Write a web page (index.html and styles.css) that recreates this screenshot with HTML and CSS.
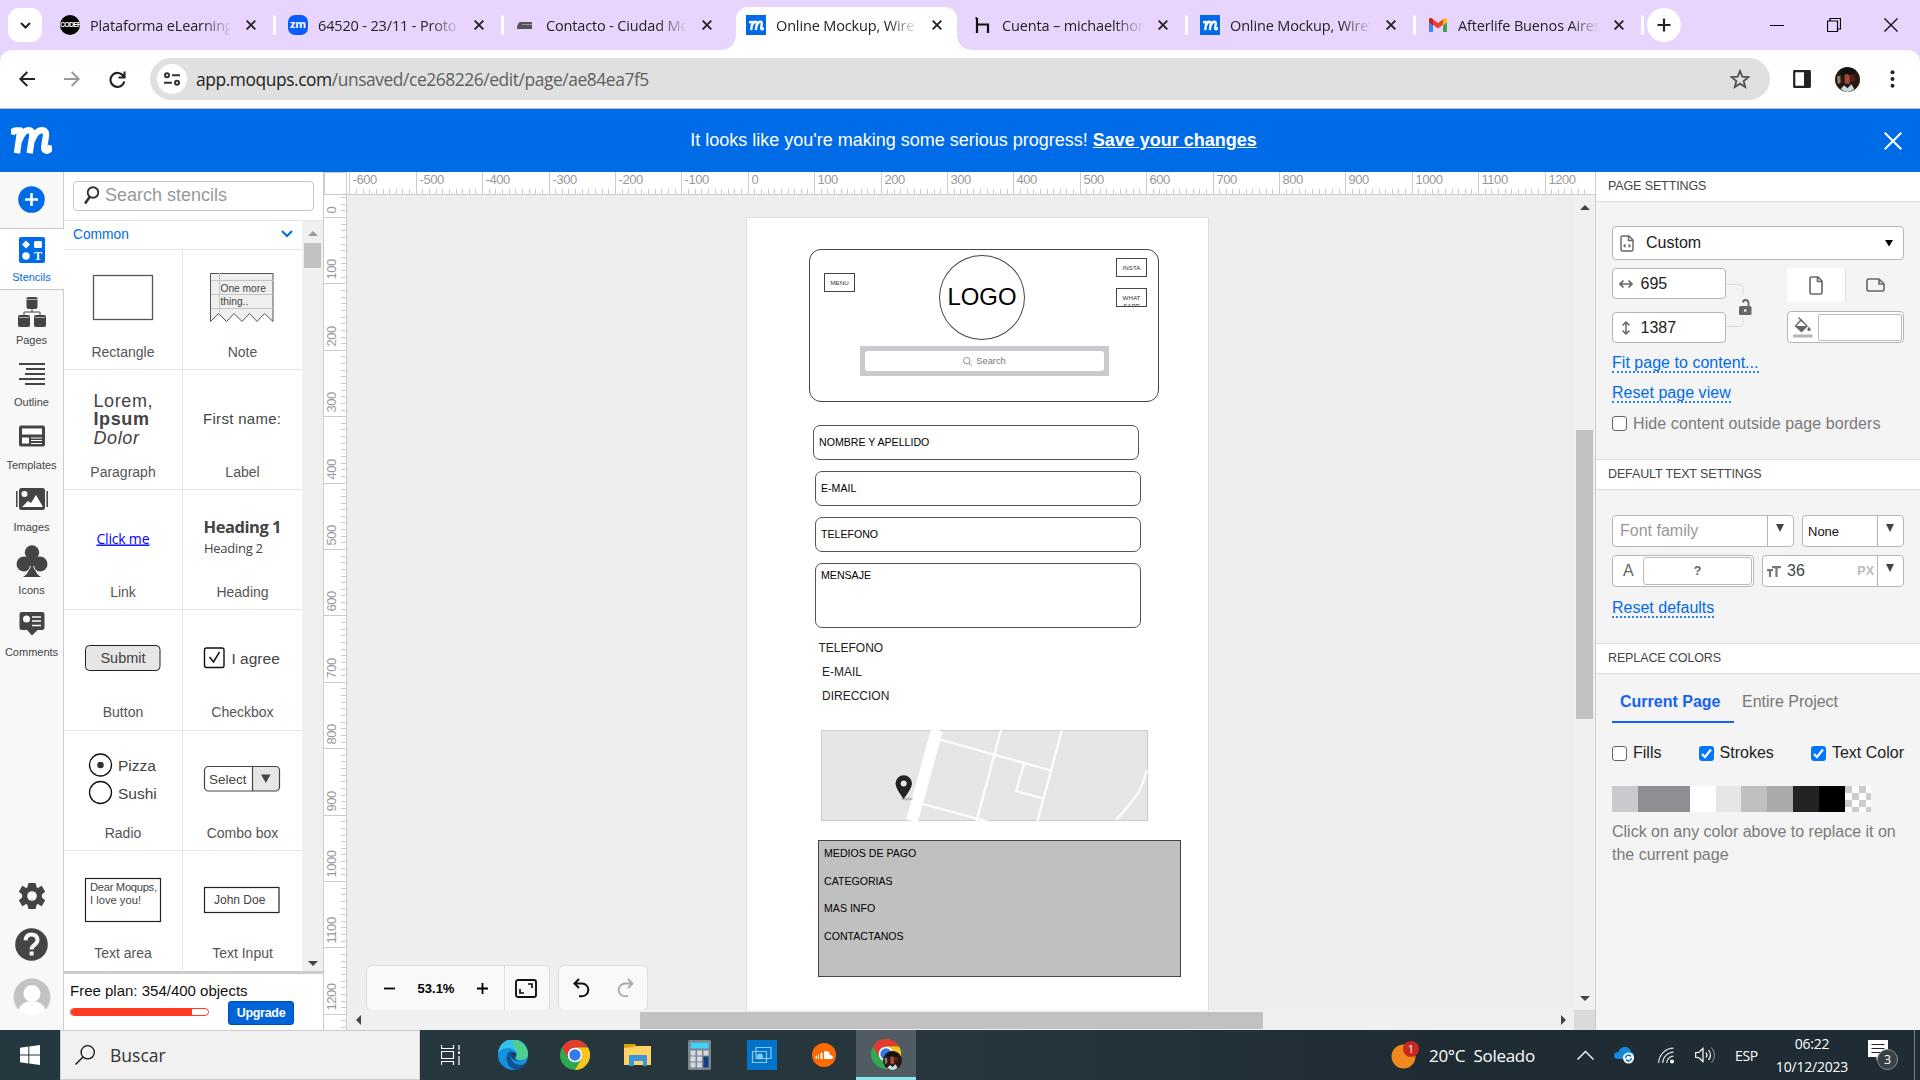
FILE: index.html
```html
<!DOCTYPE html>
<html lang="es">
<head>
<meta charset="utf-8">
<title>Online Mockup, Wireframe</title>
<link rel="stylesheet" href="styles.css">
</head>
<body>
<svg class="defs" width="0" height="0">
  <symbol id="m" viewBox="0 0 40 26"><path d="M.5 7 Q1.500 3.200 5 3.200 H9 L5.800 25.500 M8 13 Q12 3 17 3 Q21.500 3 20.700 9 L18.200 25.500 M20.500 13 Q24.500 3 30 3 Q35 3 34 9 L32.500 18.500 Q32 23.200 35 23 Q38 22.500 39.300 18" fill="none" stroke="currentColor" stroke-width="6.200" stroke-linejoin="round"/></symbol>
  <symbol id="x" viewBox="0 0 10 10"><path d="M.7 .7 9.300 9.300 M9.300 .7 .7 9.300" stroke="currentColor" stroke-width="1.900" fill="none"/></symbol>
  <symbol id="chrome" viewBox="0 0 30 30"><circle cx="15" cy="15" r="15" fill="#2da94f"/><path d="M2 7.500A15 15 0 0 1 28 7.500L15 7.500 8.500 18.700z" fill="#e33b2e"/><path d="M28 7.500A15 15 0 0 1 15 30L21.500 18.700 15 7.500z" fill="#fcc31e"/><circle cx="15" cy="15" r="7.300" fill="#fff"/><circle cx="15" cy="15" r="5.700" fill="#2f7de9"/></symbol>
  <symbol id="photo" viewBox="0 0 26 26"><circle cx="13" cy="13" r="13" fill="#2b1711"/><path d="M4 4Q13-3 22 4L19 10 8 9z" fill="#15110f"/><path d="M10 8Q14 6 15.500 10L15 18 10 17z" fill="#a04a36"/><path d="M15 8 20 8 21 14 16 16z" fill="#54211a"/><path d="M2 10 5.500 9 6 16 3 18z" fill="#8b8078"/><path d="M6 23 9.500 19 13 22 17 18 20 23Q13 29 6 23z" fill="#c8dbe2"/></symbol>
</svg>

<header class="tabs">
  <button class="tabsearch"><svg width="11" height="7" viewBox="0 0 11 7"><path d="M1 1l4.500 4.500L10 1" fill="none" stroke="#222" stroke-width="2"/></svg></button>
  <div class="tab"><i class="fav coder">CODER</i><span>Plataforma eLearning</span><svg class="tx"><use href="#x"/></svg></div>
  <div class="tab"><i class="fav zm">zm</i><span>64520 - 23/11 - Proto</span><svg class="tx"><use href="#x"/></svg></div>
  <div class="tab nosep"><svg class="fav" viewBox="0 0 20 20"><path d="M1 12Q2 7 5 7H16V9.500H6V10H16V14H1z" fill="#555"/></svg><span>Contacto - Ciudad Mo</span><svg class="tx"><use href="#x"/></svg></div>
  <div class="tab active"><i class="fav mq"><svg width="15" height="11"><use href="#m"/></svg></i><span>Online Mockup, Wiref</span><svg class="tx"><use href="#x"/></svg></div>
  <div class="tab"><svg class="fav" viewBox="0 0 20 20"><path d="M5 3v15M5 9.500h11v8.500M5 3H3.500" fill="none" stroke="#111" stroke-width="2.200"/></svg><span>Cuenta – michaelthom</span><svg class="tx"><use href="#x"/></svg></div>
  <div class="tab"><i class="fav mq"><svg width="15" height="11"><use href="#m"/></svg></i><span>Online Mockup, Wiref</span><svg class="tx"><use href="#x"/></svg></div>
  <div class="tab"><svg class="fav" viewBox="0 0 20 20"><path d="M1 5v12h4V9z" fill="#4285f4"/><path d="M15 9v8h4V5z" fill="#34a853"/><path d="M1 5Q1 2 4 3.500L10 8 16 3.500V9L10 13.500 1 7z" fill="#ea4335"/><path d="M1 5.500V7.500L5 10.500V4.300L4 3.500Q1 2 1 5.500z" fill="#c5221f"/><path d="M15 4.300 16 3.500Q19 2 19 5.500V7.500L15 10.500z" fill="#fbbc04"/></svg><span>Afterlife Buenos Aires</span><svg class="tx"><use href="#x"/></svg></div>
  <button class="newtab"><svg width="14" height="14" viewBox="0 0 14 14"><path d="M7 .5v13M.5 7h13" stroke="#222" stroke-width="2.200"/></svg></button>
  <div class="win">
    <svg width="14" height="14" viewBox="0 0 14 14"><path d="M0 7.500h14" stroke="#000"/></svg>
    <svg width="14" height="14" viewBox="0 0 14 14"><path d="M.5 3h10v10.500H.5zM3 3V.5h10.500V11H10.500" fill="none" stroke="#000" stroke-width="1.200"/></svg>
    <svg width="14" height="14" viewBox="0 0 14 14"><path d="M.5 .5l13 13M13.500 .5l-13 13" stroke="#000" stroke-width="1.200"/></svg>
  </div>
</header>

<nav class="toolbar">
  <svg width="16" height="16" viewBox="0 0 16 16"><path d="M16 8H1.500M8.300 1L1.300 8l7 7" fill="none" stroke="#222" stroke-width="2"/></svg>
  <svg width="16" height="16" viewBox="0 0 16 16"><path d="M0 8h14.500M7.700 1l7 7-7 7" fill="none" stroke="#999" stroke-width="2"/></svg>
  <svg width="17" height="17" viewBox="0 0 17 17"><path d="M14.600 5.500A7 7 0 1 0 15.300 10.500M15.500 .5V6.500H9.500" fill="none" stroke="#222" stroke-width="2.100"/></svg>
  <div class="omni">
    <i class="tune"><svg width="16" height="14" viewBox="0 0 16 14"><g fill="none" stroke="#333" stroke-width="2"><circle cx="3" cy="3.300" r="2"/><path d="M8 3.300h8M0 10.700h8"/><circle cx="13" cy="10.700" r="2"/></g></svg></i>
    <span class="url"><b>app.moqups.com</b>/unsaved/ce268226/edit/page/ae84ea7f5</span>
    <svg class="star" width="20" height="20" viewBox="0 0 20 20"><path d="M10 2l2.300 5.700 6 .4-4.600 3.900 1.500 6L10 14.700 4.800 18l1.500-6L1.700 8.100l6-.4z" fill="none" stroke="#555" stroke-width="1.900"/></svg>
  </div>
  <svg class="side" width="18" height="18" viewBox="0 0 18 18"><path d="M1.200 1.200h15.600v15.600H1.200z" fill="none" stroke="#222" stroke-width="2.200" stroke-linejoin="round"/><path d="M11 1h6v16h-6z" fill="#222"/></svg>
  <svg class="me" width="25" height="25"><use href="#photo"/></svg>
  <svg class="dots" width="5" height="18" viewBox="0 0 5 18"><g fill="#222"><circle cx="2.500" cy="2.200" r="2"/><circle cx="2.500" cy="9" r="2"/><circle cx="2.500" cy="15.800" r="2"/></g></svg>
</nav>

<section class="banner">
  <svg class="logo" width="41" height="27"><use href="#m"/></svg>
  <p>It looks like you're making some serious progress! <b>Save your changes</b></p>
  <svg class="bx" width="18" height="18" viewBox="0 0 18 18"><path d="M.7 .7l16.600 16.600M17.300 .7L.7 17.300" stroke="#fff" stroke-width="2"/></svg>
</section>

<main class="app">
  <aside class="rail">
    <div class="add"><svg width="27" height="27" viewBox="0 0 27 27"><circle cx="13.500" cy="13.500" r="13.300" fill="#006be6"/><path d="M13.500 7v13M7 13.500h13" stroke="#fff" stroke-width="2.600"/></svg></div>
    <div class="ri on"><svg width="28" height="28" viewBox="0 0 28 28"><rect x="1" y="1" width="26" height="26" rx="2" fill="#006be6"/><g fill="#fff"><path d="M8 4.500l4 4-4 4-4-4z"/><rect x="16" y="5" width="8" height="7" rx="1.500"/><circle cx="8" cy="20" r="3.700"/></g><text x="20" y="24" text-anchor="middle" font-family="Liberation Serif" font-weight="bold" font-size="12" fill="#fff">T</text></svg>Stencils</div>
    <div class="ri"><svg width="30" height="30" viewBox="0 0 30 30"><g fill="#444"><rect x="9.500" y="0" width="11" height="12" rx="2"/><rect x="1" y="18" width="12" height="12" rx="2"/><rect x="17" y="18" width="12" height="12" rx="2"/></g><path d="M15 12v3M7 18v-3h16v3" fill="none" stroke="#444"/><path d="M10 2.500h10M2 20.500h10M18 20.500h10" stroke="#ccc" stroke-width=".8"/></svg>Pages</div>
    <div class="ri"><svg width="28" height="28" viewBox="0 0 28 28"><path d="M1 4h26M8 9h19M7 14h20M1 19h26M7 24h20" stroke="#444" stroke-width="2"/></svg>Outline</div>
    <div class="ri"><svg width="28" height="28" viewBox="0 0 28 28"><rect x="1" y="3.500" width="26" height="21" rx="2" fill="#444"/><path d="M4 6.500h20v6H4zM4 15.500h7v6H4z" fill="#fff"/><path d="M13 16h11M13 18.500h11M13 21.500h11" stroke="#fff" stroke-width="1.200"/></svg>Templates</div>
    <div class="ri"><svg width="32" height="28" viewBox="0 0 32 28"><rect x="3" y="3" width="26" height="22" rx="2.500" fill="#444"/><path d="M.8 6v16M31.200 6v16" stroke="#444" stroke-width="1.500"/><circle cx="8.500" cy="9" r="3" fill="#fff"/><path d="M6 22l6-6 3 2 5-8 7 12z" fill="#fff"/></svg>Images</div>
    <div class="ri"><svg width="32" height="32" viewBox="0 0 32 32"><g fill="#444"><circle cx="16" cy="7.500" r="7.200"/><circle cx="8" cy="19" r="7.500"/><circle cx="24" cy="19" r="7.500"/><path d="M13 12h6v9q0 8 6 11H7q6-3 6-11z"/></g><path d="M14.500 21q-.5 4-4 5.500M17.500 21q.5 4 4 5.500" stroke="#f8f8f8" fill="none"/></svg>Icons</div>
    <div class="ri"><svg width="28" height="28" viewBox="0 0 28 28"><path d="M4 3h20q2.500 0 2.500 2.500v13Q26.500 21 24 21h-4.500L14 26.500 9 21H4q-2.500 0-2.500-2.500v-13Q1.500 3 4 3z" fill="#444"/><circle cx="8.500" cy="10" r="3.500" fill="#fff"/><path d="M14 8h9M14 12h9M14 16.500h9" stroke="#fff" stroke-width="1.300"/></svg>Comments</div>
    <div class="railend">
      <svg width="28" height="28" viewBox="0 0 28 28"><g fill="#444"><circle cx="14" cy="14" r="10"/><path d="M10.500 1h7l1.500 6h-10zM10.500 27h7l1.500-6h-10zM.8 9.800l3.500-6 6 3.400-4.700 6.300zM27.200 9.800l-3.500-6-6 3.400 4.700 6.300zM.8 18.200l3.500 6 6-3.400-4.700-6.300zM27.200 18.200l-3.500 6-6-3.400 4.700-6.300z"/></g><circle cx="14" cy="14" r="4.800" fill="#f8f8f8"/></svg>
      <svg width="33" height="33" viewBox="0 0 33 33"><circle cx="16.500" cy="16.500" r="16.300" fill="#444"/><path d="M10.500 12.300Q11 6.500 16.500 6.500T22.500 12Q22.500 14.500 19.500 16.800T16.600 21.500" fill="none" stroke="#f8f8f8" stroke-width="4"/><rect x="14.600" y="23.500" width="4" height="4" fill="#f8f8f8"/></svg>
      <svg width="38" height="38" viewBox="0 0 38 38"><circle cx="19" cy="19" r="18.500" fill="#c3c3c3"/><circle cx="19" cy="15.500" r="8.500" fill="#fff"/><path d="M5.500 32Q7 26.500 14 23.500H24Q31 26.500 32.500 32 26 37.800 19 37.800T5.500 32z" fill="#fff"/></svg>
    </div>
  </aside>

  <aside class="stencils">
    <div class="find"><div class="findbox"><svg width="15" height="19" viewBox="0 0 15 19"><circle cx="9" cy="6.500" r="5.300" fill="none" stroke="#333" stroke-width="1.900"/><path d="M6 10.500L1 17.500" stroke="#333" stroke-width="2.600"/></svg>Search stencils</div></div>
    <div class="list">
      <div class="lmain">
        <div class="cat">Common<svg width="12" height="8" viewBox="0 0 12 8"><path d="M1 1l5 5 5-5" fill="none" stroke="#006be6" stroke-width="2"/></svg></div>
        <div class="cells">
          <div class="cell"><svg viewBox="0 0 118 120"><rect x="29.500" y="25.500" width="59" height="44" fill="#fff" stroke="#555" stroke-width="1.300"/></svg><em>Rectangle</em></div>
          <div class="cell"><svg viewBox="0 0 118 120"><path d="M27.500 23.500h62.500v48l-8.500-8-7.500 8-7.500-8-7.500 8-8-8-7.500 8-8-8-8 8z" fill="#efefef" stroke="#555"/><path d="M28 30.500h62M28 44.500h62M28 58.500h62M36.500 23v39" stroke="#c4c4c4"/><g font-size="10.200" fill="#444"><text x="37.500" y="42">One more</text><text x="37.500" y="55">thing..</text></g></svg><em>Note</em></div>
          <div class="cell"><svg viewBox="0 0 118 120"><g font-size="18" fill="#444" letter-spacing=".6"><text x="29.500" y="37">Lorem,</text><text x="29.500" y="55" font-weight="bold">Ipsum</text><text x="29.500" y="73.500" font-style="italic">Dolor</text></g></svg><em>Paragraph</em></div>
          <div class="cell"><svg viewBox="0 0 118 120"><text x="20" y="54" font-size="15" fill="#444" letter-spacing=".3">First name:</text></svg><em>Label</em></div>
          <div class="cell"><svg viewBox="0 0 118 120"><text x="32.500" y="53.500" class="seg" font-size="14" fill="#00f" text-decoration="underline" textLength="53">Click me</text></svg><em>Link</em></div>
          <div class="cell"><svg viewBox="0 0 118 120"><g class="seg" fill="#444"><text x="20.500" y="43" font-size="16.500" font-weight="bold" textLength="78">Heading 1</text><text x="21" y="63" font-size="13" textLength="59">Heading 2</text></g></svg><em>Heading</em></div>
          <div class="cell"><svg viewBox="0 0 118 120"><rect x="21.500" y="35.500" width="74.500" height="25" rx="4" fill="#e6e6e6" stroke="#222"/><text x="59" y="53" text-anchor="middle" font-size="14.500" fill="#444">Submit</text></svg><em>Button</em></div>
          <div class="cell"><svg viewBox="0 0 118 120"><rect x="21.500" y="38" width="19.500" height="19.500" rx="2" fill="#fff" stroke="#111" stroke-width="1.400"/><path d="M26.500 47l4 5 6-10" fill="none" stroke="#111" stroke-width="1.500"/><text x="48.500" y="54" font-size="15.500" fill="#444">I agree</text></svg><em>Checkbox</em></div>
          <div class="cell"><svg viewBox="0 0 118 120"><g fill="#fff" stroke="#111" stroke-width="1.300"><circle cx="36.500" cy="34" r="11"/><circle cx="36.500" cy="61.500" r="11"/></g><circle cx="36.500" cy="34" r="3.300" fill="#333"/><g font-size="15.500" fill="#444"><text x="54" y="40">Pizza</text><text x="54" y="67.500">Sushi</text></g></svg><em>Radio</em></div>
          <div class="cell"><svg viewBox="0 0 118 120"><path d="M69.500 35.500h23q4 0 4 4v17q0 4-4 4h-23z" fill="#e6e6e6"/><rect x="21.500" y="35.500" width="75" height="24.500" rx="4" fill="none" stroke="#444" stroke-width="1.200"/><path d="M69.500 35.500V60" stroke="#444" stroke-width="1.200"/><path d="M78 43.500h9.500l-4.700 8.500z" fill="#444"/><text x="26" y="52.500" font-size="13.500" fill="#444">Select</text></svg><em>Combo box</em></div>
          <div class="cell"><svg viewBox="0 0 118 120"><rect x="21.500" y="27.500" width="75" height="43" fill="#fff" stroke="#222" stroke-width="1.200"/><g font-size="11.200" fill="#444"><text x="26" y="40" textLength="67">Dear Moqups,</text><text x="26" y="52.500">I love you!</text></g></svg><em>Text area</em></div>
          <div class="cell"><svg viewBox="0 0 118 120"><rect x="21.500" y="36.500" width="74.500" height="25" fill="#fff" stroke="#222" stroke-width="1.200"/><text x="31" y="52.500" font-size="12" fill="#444">John Doe</text></svg><em>Text Input</em></div>
        </div>
      </div>
      <div class="lbar"><i class="up"></i><i class="thumb"></i><i class="down"></i></div>
    </div>
    <div class="plan"><div><p>Free plan: 354/400 objects</p><div class="prog"><i></i></div></div><button>Upgrade</button></div>
  </aside>

  <svg class="vruler" id="vr" width="23" height="858"></svg>

  <section class="work">
    <svg class="hruler" id="hr" width="1248" height="23"></svg>
    <div class="mid">
      <div class="canvas">
        <div class="page">
          <div class="w hd"></div>
          <div class="w sm menu">MENU</div>
          <div class="w sm insta">INSTA</div>
          <div class="w sm what">WHAT<br>SAPP</div>
          <div class="w circle">LOGO</div>
          <div class="w search"><span><svg width="9" height="9" viewBox="0 0 9 9"><circle cx="3.700" cy="3.700" r="3.200" fill="none" stroke="#777" stroke-width=".8"/><path d="M6 6l2.700 2.700" stroke="#777" stroke-width=".8"/></svg>Search</span></div>
          <div class="w f f1">NOMBRE Y APELLIDO</div>
          <div class="w f f2">E-MAIL</div>
          <div class="w f f3">TELEFONO</div>
          <div class="w f f4">MENSAJE</div>
          <div class="w t t1">TELEFONO</div>
          <div class="w t t2">E-MAIL</div>
          <div class="w t t3">DIRECCION</div>
          <svg class="w map" width="327" height="91" viewBox="0 0 327 91"><rect x=".5" y=".5" width="326" height="90" fill="#e6e6e6" stroke="#ccc"/><g fill="none" stroke="#fff" stroke-width="2.200"><path d="M116 0L91 91" stroke-width="12"/><path d="M119 9.500l111 31M102 74l66 18M180 0L155.500 91M241 0L216.500 91M203 34l-8 27 27 7.500M326 40q-5 18-11 26-8 11-20 24"/></g><ellipse cx="86" cy="69" rx="6" ry="1.500" fill="#bbb"/><path d="M82.500 69Q74.500 58 74.500 53.500A8.200 8.200 0 0 1 91 53.500Q91 58 82.500 69z" fill="#222"/><circle cx="82.700" cy="53.500" r="3" fill="#e6e6e6"/></svg>
          <div class="w foot"><p>MEDIOS DE PAGO</p><p>CATEGORIAS</p><p>MAS INFO</p><p>CONTACTANOS</p></div>
        </div>
        <div class="zoom">
          <div class="zg"><svg width="11" height="11" viewBox="0 0 11 11"><path d="M0 5.500h11" stroke="#000" stroke-width="1.800"/></svg><b>53.1%</b><svg width="11" height="11" viewBox="0 0 11 11"><path d="M0 5.500h11M5.500 0v11" stroke="#000" stroke-width="1.800"/></svg></div>
          <div class="zf"><svg width="22" height="19" viewBox="0 0 22 19"><rect x="1" y="1" width="20" height="17" rx="2" fill="none" stroke="#111" stroke-width="1.900"/><path d="M13 5h4v4M5 10v4h4" fill="none" stroke="#111" stroke-width="1.700"/></svg></div>
        </div>
        <div class="undo"><svg width="17" height="20" viewBox="0 0 17 20"><path d="M2 5.500h7a6.200 6.200 0 0 1 0 12.700H6M6 1L1.500 5.500 6 10" fill="none" stroke="#111" stroke-width="2"/></svg><svg width="17" height="20" viewBox="0 0 17 20"><path d="M15 5.500H8a6.200 6.200 0 0 0 0 12.700H11M11 1l4.500 4.500L11 10" fill="none" stroke="#aaa" stroke-width="1.800"/></svg></div>
      </div>
      <div class="vbar"><i class="up dk"></i><i class="thumb"></i><i class="down"></i></div>
    </div>
    <div class="hbar"><i class="left"></i><i class="hthumb"></i><i class="right"></i><i class="corner"></i></div>
  </section>

  <aside class="props">
    <h2>PAGE SETTINGS</h2>
    <div class="sec s1">
      <div class="box sel"><svg width="14" height="17" viewBox="0 0 14 17"><path d="M1 2.500Q1 1 2.500 1H9l4 4v9.500Q13 16 11.500 16h-9Q1 16 1 14.500zM8.500 1v4.500H13" fill="none" stroke="#666" stroke-width="1.400"/><path d="M5.500 8.500v4.500L3 10.700zM8.500 8.500v4.500l2.500-2.300z" fill="#666"/></svg><span>Custom</span><svg class="car" width="8" height="8"><path d="M0 1h8L4 7.500z"/></svg></div>
      <div class="dims">
        <div class="wh">
          <div class="box num"><svg width="14" height="10" viewBox="0 0 14 10"><path d="M1 5h12M4.500 1.500L1 5l3.500 3.500M9.500 1.500L13 5 9.500 8.500" fill="none" stroke="#666" stroke-width="1.700"/></svg>695</div>
          <div class="box num"><svg width="14" height="14" viewBox="0 0 10 14"><path d="M5 1v12M1.500 4.500L5 1l3.500 3.500M1.500 9.500L5 13l3.500-3.500" fill="none" stroke="#666" stroke-width="1.500"/></svg>1387</div>
        </div>
        <svg class="lock" width="27" height="75" viewBox="0 0 27 75"><path d="M0 16.500h14q3 0 3 3V27M0 58.500h14q3 0 3-3V50" fill="none" stroke="#ddd"/><path d="M17 34.500Q17 32 19.500 32T22.500 34.500V38" fill="none" stroke="#666" stroke-width="1.800"/><rect x="13" y="38" width="12.500" height="9" rx="1.500" fill="#666"/><circle cx="19.200" cy="42.500" r="1.300" fill="#fff"/></svg>
        <div class="po">
          <div class="ori"><div class="por"><svg width="14" height="19" viewBox="0 0 14 19"><path d="M1 2.500Q1 1 2.500 1H9l4 4v11.500Q13 18 11.500 18h-9Q1 18 1 16.500zM8.500 1v4.500H13" fill="none" stroke="#666" stroke-width="1.600"/></svg></div><div class="lan"><svg width="19" height="14" viewBox="0 0 19 14"><path d="M2.500 1H13l5 5v5.500Q18 13 16.500 13h-14Q1 13 1 11.500v-9Q1 1 2.500 1zM13 1v5h5" fill="none" stroke="#666" stroke-width="1.600"/></svg></div></div>
          <div class="box fill"><svg width="20" height="21" viewBox="0 0 20 21"><path d="M8 3l6 6-5.500 5.500L2.500 9z" fill="none" stroke="#666" stroke-width="1.400"/><path d="M3 9h11l-5.500 5.500z" fill="#666"/><path d="M5.500 .5l4 4" stroke="#666" stroke-width="1.300"/><path d="M16 9.500q3.400 4.300 0 4.500-3.400-.2 0-4.500z" fill="#666"/><path d="M0 17.500h19.500v3H0z" fill="#b9b4ae"/></svg><i></i></div>
        </div>
      </div>
      <a>Fit page to content...</a><a>Reset page view</a>
      <label><i class="cb"></i>Hide content outside page borders</label>
    </div>
    <h2>DEFAULT TEXT SETTINGS</h2>
    <div class="sec s2">
      <div class="row"><div class="box ff"><span>Font family</span><i class="drop"></i></div><div class="box no"><span>None</span><i class="drop"></i></div></div>
      <div class="row"><div class="box ac"><span>A</span><b>?</b></div><div class="box sz"><svg width="14" height="11" viewBox="0 0 14 11"><path d="M5 1.200h9M9.500 1v10M0 4.200h6M3 4v7" stroke="#777" stroke-width="2.200"/></svg><span>36</span><b>PX</b><i class="drop"></i></div></div>
      <a>Reset defaults</a>
    </div>
    <h2>REPLACE COLORS</h2>
    <div class="sec s3">
      <div class="ptabs"><b>Current Page</b><span>Entire Project</span></div>
      <div class="checks"><label><i class="cb"></i>Fills</label><label><i class="cb ck"><svg viewBox="0 0 15 15"><path d="M3 8l3 3 6-7.500" fill="none" stroke="#fff" stroke-width="2.300"/></svg></i>Strokes</label><label><i class="cb ck"><svg viewBox="0 0 15 15"><path d="M3 8l3 3 6-7.500" fill="none" stroke="#fff" stroke-width="2.300"/></svg></i>Text Color</label></div>
      <div class="sw"><i class="c1"></i><i class="c2"></i><i class="c2"></i><i class="c3"></i><i class="c4"></i><i class="c5"></i><i class="c6"></i><i class="c7"></i><i class="c8"></i><i class="c9"></i></div>
      <p>Click on any color above to replace it on the current page</p>
    </div>
  </aside>
</main>

<footer class="task">
  <div class="start"><svg width="20" height="20" viewBox="0 0 20 20"><path d="M0 2.800l8.300-1.200v7.900H0zM9.300 1.500L20 0v9.500H9.300zM0 10.500h8.300v7.900L0 17.200zM9.300 10.500H20V20L9.300 18.500z" fill="#fff"/></svg></div>
  <div class="buscar"><svg width="20" height="20" viewBox="0 0 20 20"><circle cx="12.700" cy="7.300" r="6.600" fill="none" stroke="#111" stroke-width="1.300"/><path d="M8 12L.5 19.500" stroke="#111" stroke-width="1.400"/></svg>Buscar</div>
  <div class="ic"><svg width="20" height="20" viewBox="0 0 20 20"><path d="M.5 0v3.500h12V0M.5 6.500h12v7H.5zM.5 20v-3.500h12V20M18 0v5M18 11v9" fill="none" stroke="#fff" stroke-width="1.200"/><path d="M17 6.500h2v2.500h-2z" fill="#fff"/></svg></div>
  <div class="ic"><svg width="30" height="30" viewBox="0 0 30 30"><circle cx="15" cy="15" r="15" fill="#1490df"/><path d="M0 13A15 15 0 0 1 30 15Q29 20 23 20 18 20 18 17.500 20 15 18 12 13 6 5 9 1 11 0 13z" fill="#35c1e8"/><path d="M14 0Q29 1 30 15 29 20 23 20 18 20 18 17.500 21 14 18.500 11 16 6 14 0z" fill="#4fd08a"/><path d="M12 11Q6 16 10 24 13 29 18 29.700 24 29 27.500 23.500 20 27 15 22 11 17 14 11.500z" fill="#11528f"/><path d="M13 13.500Q16.500 10.500 18.200 14 18 16 16.500 17.500 17 20 21 20.800 14.500 21 13 16z" fill="#1b3c55"/></svg></div>
  <div class="ic"><svg width="30" height="30"><use href="#chrome"/></svg></div>
  <div class="ic"><svg width="28" height="24" viewBox="0 0 28 24"><path d="M0 1h11l3 4H0z" fill="#dfa000"/><path d="M0 5l14-2h13v19H0z" fill="#fed363"/><path d="M5 13q0-1 1-1h16q1 0 1 1v10h-4v-5h-9v5H5z" fill="#3a95dd"/></svg></div>
  <div class="ic"><svg width="23" height="30" viewBox="0 0 23 30"><rect width="23" height="30" rx="1.500" fill="#7b858d"/><rect x="2.500" y="2.500" width="18" height="6" fill="#3fd2f5"/><g fill="#d6dade"><path d="M2.500 10.500h5v5h-5zM9 10.500h5v5H9zM15.500 10.500h5v5h-5zM2.500 16.500h5v5h-5zM9 16.500h5v5H9zM2.500 22.500h5v5h-5zM9 22.500h5v5H9z"/></g><path d="M15.500 16.500h5v11h-5z" fill="#123f82"/></svg></div>
  <div class="ic"><svg width="30" height="30" viewBox="0 0 30 30"><rect width="30" height="30" fill="#0173c9"/><path d="M9 7.500h15v11H9zM5.500 11.500h14v11h-14z" fill="none" stroke="#8fc8ee" stroke-width="1.200"/><circle cx="13" cy="16.500" r="3" fill="#8fc8ee"/></svg></div>
  <div class="ic"><svg width="24" height="24" viewBox="0 0 24 24"><circle cx="12" cy="12" r="12" fill="#ff6a00"/><path d="M12 16V8.500q5-2 6 3.500 3 0 3 2t-2 2zM6 16v-4l1-.5V16zM8.500 16v-5.500l2-1V16zM3.500 15.500v-2.500l1.500-.5V16z" fill="#fff"/></svg></div>
  <div class="ic cur"><svg width="32" height="32" viewBox="0 0 32 32"><use href="#chrome" width="30" height="30"/><use href="#photo" x="12" y="12" width="19" height="19"/></svg></div>
  <div class="tray">
    <svg width="28" height="28" viewBox="0 0 28 28"><circle cx="12.500" cy="15.500" r="12" fill="#f08a1c"/><circle cx="20" cy="8" r="8" fill="#c8281e"/><text x="20" y="12" text-anchor="middle" font-size="11" fill="#fff">1</text></svg>
    <span class="temp">20°C&nbsp; Soleado</span>
    <svg class="chev" width="17" height="10" viewBox="0 0 17 10"><path d="M.5 9.500l8-8 8 8" fill="none" stroke="#fff" stroke-width="1.400"/></svg>
    <svg class="od" width="21" height="18" viewBox="0 0 21 18"><path d="M4 13Q0 13 0 9.500T4.500 6Q6 1 11 1t6 5q3 .5 3 4t-4 3z" fill="#1389dc"/><circle cx="14.500" cy="12" r="5.500" fill="#fff"/><path d="M11.500 12a3 3 0 0 1 5.500-1.500M17.500 12a3 3 0 0 1-5.500 1.500" fill="none" stroke="#1376c4" stroke-width="1.500"/></svg>
    <svg class="wf" width="17" height="17" viewBox="0 0 17 17"><g fill="none" stroke="#ddd" stroke-width="1.200"><path d="M.7 16A15 15 0 0 1 15.500 1.200"/><path d="M4.700 16A11 11 0 0 1 15.500 5.200"/><path d="M8.700 16A7 7 0 0 1 15.500 9.200"/></g><circle cx="14" cy="14.500" r="2" fill="#fff"/></svg>
    <svg class="vo" width="21" height="18" viewBox="0 0 21 18"><g fill="none" stroke="#fff" stroke-width="1.200"><path d="M.7 6.500h3L8 2.500v13l-4.300-4h-3z"/><path d="M11 6.500q2 2.500 0 5"/><path d="M13.500 4q4 5 0 10"/><path d="M16.500 1.500q6 7.500 0 15" stroke="#788"/></g></svg>
    <span class="esp">ESP</span>
    <span class="clock">06:22<br>10/12/2023</span>
    <svg class="note" width="32" height="32" viewBox="0 0 32 32"><path d="M0 1h20v17h-8l-3.500 3.500V18H0z" fill="#fff"/><path d="M3.500 5.500h13M3.500 9.500h13M3.500 13.500h9" stroke="#223"/><circle cx="19.500" cy="20.500" r="10" fill="#3a4145" stroke="#8a8f92"/><text x="19.500" y="25" text-anchor="middle" font-size="12.500" fill="#fff" class="seg">3</text></svg>
    <i class="desk"></i>
  </div>
</footer>
<script src="rulers.js"></script>
</body>
</html>
```
FILE: rulers.js
```js
// Draws both rulers: one labelled division per 100 units at the current zoom.
(function () {
  var step = 66.4;
  function build(id, zero, from, to, vertical, length) {
    var out = '';
    for (var v = from; v <= to; v += 10) {
      var p = Math.round(zero + v * step / 100) + 0.5;
      if (p < 0 || p > length) continue;
      var major = v % 100 === 0;
      var a = major ? 0 : 17;
      out += vertical
        ? '<path d="M' + a + ' ' + p + 'H22"/>'
        : '<path d="M' + p + ' ' + a + 'V22"/>';
      if (major) {
        out += vertical
          ? '<text transform="translate(12 ' + (p - 4) + ') rotate(-90)">' + v + '</text>'
          : '<text x="' + (p + 3) + '" y="12">' + v + '</text>';
      }
    }
    out += vertical ? '<path d="M22.5 0V858M0 22.5H22"/>' : '<path d="M0 22.500H1248"/>';
    document.getElementById(id).innerHTML = out;
  }
  build('hr', 400.7, -600, 1260, false, 1248);
  build('vr', 45, -30, 1220, true, 858);
  var corner = document.getElementById('vr');
  corner.insertAdjacentHTML('beforeend', '<path class="blank" d="M0 0H22V22H0z"/>');
})();
```
FILE: styles.css
```css
*{box-sizing:border-box}
body{margin:0;width:1920px;height:1080px;overflow:hidden;display:grid;grid-template-rows:50px 58px 64px 858px 50px;font-family:"Liberation Sans",Arial,sans-serif;color:#333;background:#fff}
p,h2{margin:0;font-weight:400}
i,em{font-style:normal}
svg{flex:none;display:block}
button{border:0;padding:0;font:inherit}
.defs{position:absolute}
.seg{font-family:"Open Sans","Noto Sans",sans-serif}

/* browser tabs */
.tabs{background:#e8d5fd;display:flex;align-items:center;font-family:"Open Sans","Noto Sans",sans-serif;font-size:14.500px;color:#222}
.tabsearch{width:34px;height:34px;border-radius:11px;background:#fff;margin:0 11px 0 8px;display:grid;place-items:center}
.tab{width:228px;height:50px;display:flex;align-items:center;padding-left:7px;flex:none;position:relative}
.tab::after{content:"";width:3px;height:20px;border-radius:2px;background:#fff;margin-left:17px}
.nosep::after{visibility:hidden}
.fav{width:20px;height:20px;flex:none;overflow:hidden}
.tab span{width:140px;margin-left:10px;overflow:hidden;white-space:nowrap;letter-spacing:-.15px;-webkit-mask:linear-gradient(90deg,#000 112px,transparent 142px);mask:linear-gradient(90deg,#000 112px,transparent 142px)}
.tx{width:10px;height:10px;margin-left:16px}
.coder{border-radius:50%;background:#000;color:#fff;font:bold 7px/20px "Liberation Sans",sans-serif;text-align:center;letter-spacing:-.8px}
.zm{border-radius:7px;background:#0b5cff;color:#fff;font-size:11px;font-weight:700;line-height:18px;text-align:center}
.mq{background:#006be6;color:#fff;display:grid;place-items:center}
.active{background:#fff;height:43px;align-self:flex-end;width:221px;border-radius:12px 12px 0 0;padding:0 0 7px 10px;margin:0 8px 0 -1px}
.active::before,.active::after{content:"";position:absolute;bottom:0;width:14px;height:14px;margin:0;border-radius:0}
.active::before{left:-14px;background:radial-gradient(circle at 0 0,transparent 13.500px,#fff 14px)}
.active::after{right:-14px;background:radial-gradient(circle at 100% 0,transparent 13.500px,#fff 14px)}
.newtab{width:34px;height:34px;border-radius:50%;background:#fff;margin-left:-2px;display:grid;place-items:center;flex:none}
.win{margin-left:auto;display:flex;gap:43px;padding-right:22px}

/* browser toolbar */
.toolbar{display:flex;align-items:center;padding-left:19px;background:#fff;border-radius:12px 12px 0 0;box-shadow:0 -12px 0 #e8d5fd;clip-path:inset(0)}
.toolbar>svg:nth-child(2){margin-left:29px}
.toolbar>svg:nth-child(3){margin-left:29px}
.omni{margin-left:24px;width:1620px;height:42px;border-radius:21px;background:#e0e0e0;display:flex;align-items:center;padding:0 20px 0 7px;font:17.400px "Open Sans","Noto Sans",sans-serif;color:#5f5f5f}
.tune{width:30px;height:30px;border-radius:50%;background:#fff;display:grid;place-items:center;margin-right:9px}
.url{letter-spacing:-.43px}
.url b{font-weight:400;color:#222}
.star{margin-left:auto}
.side{margin-left:23px}
.me{margin-left:24px}
.dots{margin-left:30px}

/* notice */
.banner{background:#006be6;border-top:1px solid #b8c4c4;display:flex;align-items:center;justify-content:space-between;padding:0 18px 0 11px;color:#fff;font-size:18px}
.banner p{padding-left:11px;white-space:nowrap}
.banner b{text-decoration:underline}

.app{display:flex;min-height:0}
/* icon rail */
.rail{width:64px;background:#f8f8f8;border-right:1px solid #ccc;display:flex;flex-direction:column;align-items:center;font-size:11px;color:#444}
.add{height:57px;width:64px;margin-right:-1px;border-bottom:1px solid #ccc;border-right:1px solid #ccc;display:grid;place-items:center;padding:0 1px 1px 0}
.ri{height:62.400px;width:100%;display:grid;grid-template-rows:43px 14px;align-content:start;place-items:center;line-height:14px}
.on{background:#fff;color:#006be6;width:64px;margin-right:-1px;border-bottom:1px solid #ccc;padding-right:1px;height:61px;grid-template-rows:41px 14px}
.railend{margin-top:auto;display:flex;flex-direction:column;align-items:center;gap:17px;padding-bottom:14px}
.railend svg:first-child{margin-bottom:1px}

/* stencil list */
.stencils{width:260px;border-right:1px solid #ccc;display:flex;flex-direction:column;background:#fff}
.find{height:49px;border-bottom:1px solid #e5e5e5;padding:9px;flex:none}
.findbox{width:241px;height:30px;border:1px solid #c4c4c4;border-radius:4px;display:flex;align-items:center;gap:6px;padding:0 0 2px 10px;font-size:18px;color:#999}
.list{display:flex;height:750px;overflow:hidden}
.lmain{width:238px}
.cat{height:27.500px;display:flex;align-items:center;justify-content:space-between;padding:0 9px 1px;color:#006be6;font-size:13.750px}
.cells{display:grid;grid-template-columns:119px 119px;grid-auto-rows:120.300px}
.cell{border-top:1px solid #e5e5e5;display:grid;position:relative}
.cell:nth-child(odd){border-right:1px solid #e5e5e5}
.cell svg{width:118px;height:120px;grid-area:1/1}
.cell em{grid-area:1/1;align-self:end;text-align:center;font-size:14px;line-height:16px;padding-bottom:10px;color:#555}
.lbar{width:21px;background:#f0f0f0;display:flex;flex-direction:column;align-items:center;padding-top:10px}
.up,.down{border:5px solid transparent;width:0;height:0;flex:none}
.up{border-bottom-color:#999;border-top:0}
.dk{border-bottom-color:#444}
.down{border-top-color:#444;border-bottom:0;margin-top:auto}
.thumb{width:17px;background:#c1c1c1}
.lbar .thumb{height:25px;margin-top:7px}
.lbar .down{margin-bottom:5px}
.plan{border-top:3px solid #ccc;height:59px;padding:0 6px;display:flex;color:#111;font-size:15px;white-space:nowrap}
.plan>div{width:158px;padding-top:8px}
.prog{width:139px;height:8px;border:1px solid #ff3a24;border-radius:4px;margin-top:9px;overflow:hidden}
.prog i{display:block;height:8px;width:121px;background:#ff3a24}
.plan button{align-self:flex-start;margin:27px 0 0;width:66px;height:24px;background:#0063d8;border:1px solid #004fb0;border-radius:3px;color:#fff;font-weight:700;font-size:12.500px;letter-spacing:-.3px}

/* rulers */
.vruler,.hruler{background:#fff;stroke:#ccc;fill:none;shape-rendering:crispEdges}
.vruler text,.hruler text{stroke:none;fill:#999;font-size:13px;letter-spacing:-.45px}
.vruler .blank{fill:#fff;stroke:#ccc}

/* canvas */
.work{width:1249px;display:flex;flex-direction:column;border-right:1px solid #ccc}
.mid{display:flex;height:815px}
.canvas{width:1227px;background:#eee;position:relative;overflow:hidden}
.page{position:absolute;left:399px;top:22px;width:463px;height:900px;background:#fff;border:1px solid #ddd}
.w{position:absolute;margin:-218px 0 0 -747px;color:#000}
.hd{left:809px;top:249px;width:350px;height:153px;border:1px solid #444;border-radius:12px}
.sm{width:31px;height:19px;border:1px solid #444;font-size:6.200px;line-height:8px;padding-top:5px;text-align:center;overflow:hidden;color:#333}
.menu{left:824px;top:273px}
.insta{left:1116px;top:258px}
.what{left:1116px;top:288px}
.circle{left:939px;top:255px;width:86px;height:85px;border:1px solid #444;border-radius:50%;font-size:23.900px;display:grid;place-items:center;line-height:28px;padding-bottom:1px}
.search{left:860px;top:346px;width:249px;height:30px;background:#c9c9ce;padding:5px}
.search span{background:#fff;border-radius:3px;height:20px;display:flex;align-items:center;justify-content:center;gap:4px;font-size:9.300px;color:#777}
.f{width:326px;height:35px;border:1px solid #555;border-radius:7px;display:flex;align-items:center;padding:0 0 2px 5px;font-size:10.600px}
.f1{left:813px;top:425px}
.f2{left:815px;top:471px}
.f3{left:815px;top:517px}
.f4{left:815px;top:563px;height:65px;align-items:flex-start;padding-top:5px}
.t{font-size:12px;line-height:14px;color:#222}
.t1{left:818.500px;top:641px}
.t2{left:822px;top:665px}
.t3{left:822px;top:689px}
.map{left:821px;top:730px}
.foot{left:818px;top:840px;width:363px;height:137px;background:#c0c0c0;border:1px solid #444;font-size:10.600px;line-height:12px;padding:6px 5px;display:flex;flex-direction:column;gap:15.500px}
.zoom,.undo{position:absolute;top:770px;height:46px;background:#f9f9f9;border:1px solid #ddd;border-radius:6px;display:flex;align-items:center}
.zoom{left:19px;width:184px;font-size:13px;color:#000}
.zg{width:138px;height:100%;border-right:1px solid #ddd;display:flex;align-items:center;justify-content:space-between;padding:0 16px 0 17px}
.zf{flex:1;display:grid;place-items:center;padding-right:2px}
.undo{left:211px;width:90px;justify-content:space-between;padding:0 13px 0 14px}
.vbar{width:21px;background:#f0f0f0;display:flex;flex-direction:column;align-items:center;padding:10px 0 9px}
.vbar .thumb{height:289px;margin-top:220px}
.hbar{height:20px;background:#f0f0f0;display:flex;align-items:center}
.left,.right{border:5px solid transparent}
.left{border-right-color:#444;border-left:0;margin-left:9px}
.right{border-left-color:#444;border-right:0;margin-left:298px}
.hthumb{width:623px;height:17px;background:#c1c1c1;margin-left:279px}
.corner{width:21px;height:20px;background:#dadada;margin-left:auto}

/* property panel */
.props{flex:1;background:#f4f4f4;font-size:16px}
.props h2{height:30px;background:#fff;border-bottom:1px solid #ddd;font-size:12.500px;line-height:29px;padding-left:12px;color:#444;letter-spacing:-.12px}
.props h2+.sec+h2{border-top:1px solid #ddd;height:31px}
.sec{padding:0 16px}
.s1{height:257px;padding-top:24px}
.s2{height:153px;padding-top:25px}
.box{background:#fff;border:1px solid #b5b5b5;border-radius:4px;display:flex;align-items:center}
.sel{height:34px;padding:0 10px 0 7px;color:#222}
.sel span{margin-left:12px}
.car{margin-left:auto}
.dims{display:flex;margin-top:8px}
.wh{display:flex;flex-direction:column;gap:13px}
.num{width:114px;height:31px;padding-left:6px;gap:7.500px;color:#222}
.po{margin-left:34px}
.ori{display:flex;height:34px}
.por{width:59px;background:#fff;border-right:1px solid #ddd;display:grid;place-items:center;border-radius:3px}
.lan{width:58px;display:grid;place-items:center}
.fill{width:117px;height:32px;margin-top:9px;padding:1px;justify-content:space-between;padding-left:5px}
.fill i{width:84px;height:27px;border:1px solid #bbb;border-radius:2px}
.props a{display:table;color:#006be6;border-bottom:2px dotted #2b83ea;line-height:16px;height:17px;white-space:nowrap}
.s1 a{margin-top:11.500px;letter-spacing:.03px}
.s1 a+a{margin-top:12px}
.s1 label{color:#7a7a7a;margin-top:11px;letter-spacing:.09px}
label{display:flex;align-items:center;gap:6px;height:20px}
.cb{width:15px;height:15px;border:1px solid #666;border-radius:3px;background:#fff}
.ck{background:#0075ff;border:0}
.row{display:flex;justify-content:space-between;height:32px;margin-bottom:8px}
.row .box{height:32px}
.drop{width:26px;height:30px;border-left:1px solid #b5b5b5;position:relative}
.drop::before{content:"";position:absolute;left:8px;top:8px;border:4px solid transparent;border-top:8px solid #444;border-bottom:0}
.ff{width:182px;color:#999;justify-content:space-between;padding-left:7px}
.no{width:102px;font-size:13px;color:#111;justify-content:space-between;padding-left:5px}
.ac{width:142px;color:#666;justify-content:space-between;padding:0 1px 0 10px}
.ac b{width:109px;height:28px;border:1px solid #bbb;border-radius:3px;font-size:12.500px;line-height:27px;text-align:center}
.sz{width:142px;padding-left:4px;color:#444}
.sz span{margin-left:6px}
.sz b{margin-left:auto;font-size:12.500px;color:#bbb;margin-right:3px}
.s2 a{margin-top:13px}
.ptabs{display:flex;padding-top:17px;color:#777}
.ptabs b{color:#1463f3;border-bottom:2px solid #1463f3;width:122px;padding-left:8px;height:32px;line-height:22px;white-space:nowrap}
.ptabs span{margin-left:8px;line-height:22px}
.checks{display:flex;justify-content:space-between;color:#222;margin-top:20px}
.sw{display:flex;margin-top:23px}
.sw i{width:25.900px;height:26px}
.c1{background:#c9c9ce}.c2{background:#8e8e93}.c3{background:#fff}.c4{background:#e6e6e6}.c5{background:#c0c0c0}.c6{background:#aaa}.c7{background:#232323}.c8{background:#000}
.c9{background:conic-gradient(#fff 25%,#ccc 0 50%,#fff 0 75%,#ccc 0) 0 0/14px 14px}
.s3 p{color:#7a7a7a;line-height:23px;margin-top:8px}

/* taskbar */
.task{background:linear-gradient(90deg,#25373f,#27363c 50%,#1f2c33 75%);display:flex;color:#fff;font-family:"Open Sans","Noto Sans",sans-serif}
.start{width:60px;display:grid;place-items:center}
.buscar{width:360px;background:#f1f1f1;border:1px solid #ccc;display:flex;align-items:center;gap:15px;padding-left:14px;color:#333;font-size:17.500px}
.ic{width:62.200px;display:grid;place-items:center}
.cur{background:#505c61;border-bottom:3px solid #86e8f0;width:60px;margin-left:1px;padding:3px 0 0 2px}
.tray{margin-left:auto;display:flex;align-items:center}
.temp{font-size:17px;margin-left:10px;width:112px;white-space:nowrap;letter-spacing:-.3px}
.chev{margin-left:36px}
.od{margin-left:20px}
.wf{margin-left:23px}
.vo{margin-left:20px}
.esp{font-size:14px;margin-left:19px;width:24px;letter-spacing:-.4px}
.clock{font-size:14px;line-height:23px;text-align:center;width:76px;margin-left:15px;letter-spacing:-.2px;white-space:nowrap}
.note{margin-left:18px}
.desk{width:1px;height:50px;background:#76848a;margin:0 5px 0 14px}
```
